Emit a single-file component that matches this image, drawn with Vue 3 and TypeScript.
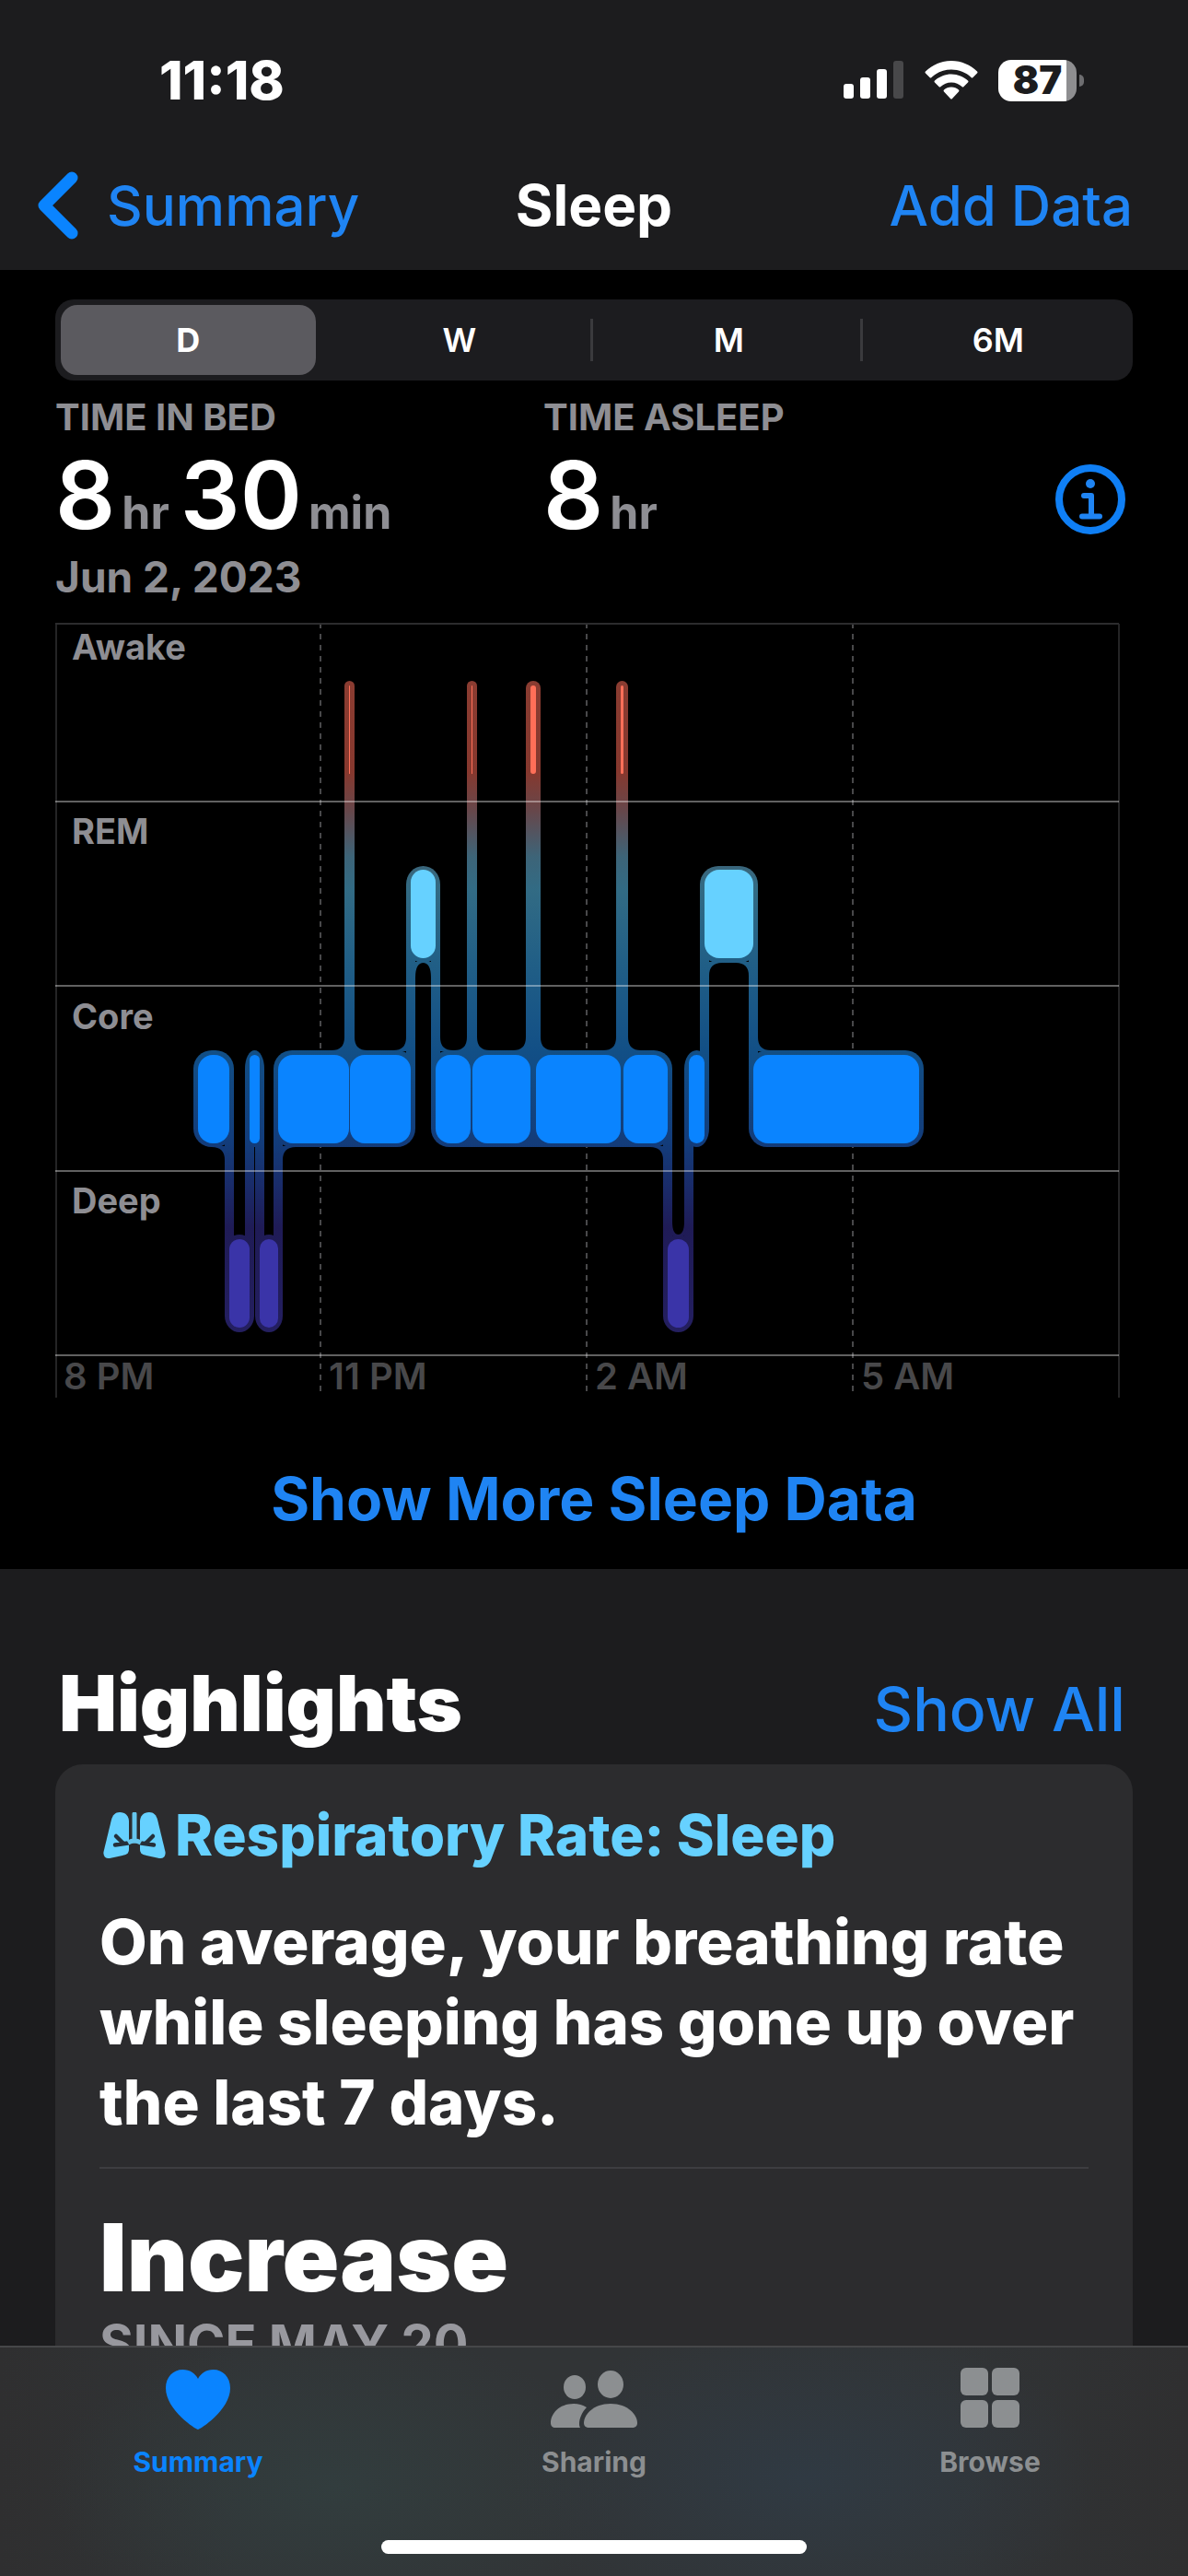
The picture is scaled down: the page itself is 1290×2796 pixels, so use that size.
<script setup lang="ts">
import { ref } from 'vue'

interface Bar {
  x: number
  w: number
}

interface Stage {
  name: string
  top: number
  color: string
  bars: Bar[]
}

interface Fillet {
  x: number
  y: number
  dx: number
  dy: number
  rx: number
  ry: number
}

const ranges = ['D', 'W', 'M', '6M']
const range = ref('D')

const barHeight = 96
const halo = 5

const stages: Stage[] = [
  {
    name: 'Awake',
    top: 68,
    color: '#ff6f58',
    bars: [{ x: 319, w: 1 }, { x: 452, w: 1 }, { x: 516, w: 6 }, { x: 614, w: 3 }],
  },
  { name: 'REM', top: 268, color: '#66d1ff', bars: [{ x: 386, w: 27 }, { x: 705, w: 53 }] },
  {
    name: 'Core',
    top: 469,
    color: '#0a84ff',
    bars: [
      { x: 155, w: 34 },
      { x: 211, w: 11 },
      { x: 242, w: 77 },
      { x: 320, w: 66 },
      { x: 413, w: 38 },
      { x: 453, w: 63 },
      { x: 522, w: 92 },
      { x: 617, w: 48 },
      { x: 688, w: 17 },
      { x: 758, w: 180 },
    ],
  },
  { name: 'Deep', top: 669, color: '#3a34a8', bars: [{ x: 189, w: 22 }, { x: 222, w: 20 }, { x: 665, w: 23 }] },
]

// Uninterrupted runs of a stage share one halo
const coreRuns: Bar[] = [
  { x: 155, w: 34 },
  { x: 211, w: 11 },
  { x: 242, w: 144 },
  { x: 413, w: 252 },
  { x: 688, w: 17 },
  { x: 758, w: 180 },
]

// Vertical links between REM and Core, and between Core and Deep
const remLinks = [381, 408, 700, 753]
const deepLinks = [184, 206, 217, 237, 660, 683]

const fillet = (x: number, y: number, dx: number, dy: number, rx = 14, ry = rx): Fillet => ({ x, y, dx, dy, rx, ry })

const fillets: Fillet[] = [
  ...stages[0].bars.flatMap((b) => [
    fillet(b.x - halo, 464, -1, -1),
    fillet(b.x + b.w + halo, 464, 1, -1),
  ]),
  fillet(381, 464, -1, -1),
  fillet(418, 464, 1, -1),
  fillet(763, 464, 1, -1),
  fillet(391, 369, 1, 1, 9, 16),
  fillet(408, 369, -1, 1, 9, 16),
  fillet(710, 369, 1, 1),
  fillet(753, 369, -1, 1),
  fillet(184, 569, -1, 1),
  fillet(247, 569, 1, 1),
  fillet(660, 569, -1, 1),
  fillet(670, 664, 1, -1, 7, 14),
  fillet(683, 664, -1, -1, 7, 14),
]

const filletPath = (f: Fillet): string =>
  `M${f.x} ${f.y - f.dy}V${f.y + f.dy * f.ry}Q${f.x} ${f.y} ${f.x + f.dx * f.rx} ${f.y}V${f.y - f.dy}Z`

const rows = [194, 394, 595, 795]
const labelBaselines = [40, 240, 441, 641]
const hours = [
  { x: 0, label: '8 PM' },
  { x: 288, label: '11 PM' },
  { x: 577, label: '2 AM' },
  { x: 866, label: '5 AM' },
]

const tabs = ['Summary', 'Sharing', 'Browse']
const activeTab = ref('Summary')
</script>

<template>
  <div class="app">
    <header class="top">
      <div class="status">
        <span class="clock">11:18</span>
        <div class="indicators">
          <svg class="signal" width="66" height="42" viewBox="0 0 66 42" aria-hidden="true">
            <rect x="0" y="25" width="11" height="16" rx="3" fill="#fff" />
            <rect x="18" y="18" width="11" height="23" rx="3" fill="#fff" />
            <rect x="36" y="9" width="11" height="32" rx="3" fill="#fff" />
            <rect x="54" y="0" width="11" height="41" rx="3" fill="#48484a" />
          </svg>
          <svg class="wifi" width="58" height="42" viewBox="0 0 58 42" aria-hidden="true">
            <path d="M29 0C40 0 50 4.500 57 11.500Q58 12.500 57 13.500L52.500 18Q51.500 19 50.500 18C45 12.500 37 9.500 29 9.500S13 12.500 7.500 18Q6.500 19 5.500 18L1 13.500Q0 12.500 1 11.500C8 4.500 18 0 29 0Z" fill="#fff" />
            <path d="M29 14.500C36 14.500 42.500 17.500 47 21.500Q48 22.500 47 23.500L42.500 28Q41.500 29 40.500 28C37.500 25.500 33.500 23.500 29 23.500S20.500 25.500 17.500 28Q16.500 29 15.500 28L11 23.500Q10 22.500 11 21.500C15.500 17.500 22 14.500 29 14.500Z" fill="#fff" />
            <path d="M29 28.500C32 28.500 35 29.700 37 31.500Q38 32.500 37 33.500L30 41Q29 42 28 41L21 33.500Q20 32.500 21 31.500C23 29.700 26 28.500 29 28.500Z" fill="#fff" />
          </svg>
          <div class="battery"><span>87</span></div>
        </div>
      </div>
      <nav class="nav">
        <a href="#" class="back">
          <svg width="46" height="74" viewBox="0 0 46 74" aria-hidden="true">
            <path d="M38 7L8 37L38 67" fill="none" stroke="#0a84ff" stroke-width="13" stroke-linecap="round" stroke-linejoin="round" />
          </svg>
          Summary
        </a>
        <h1>Sleep</h1>
        <button type="button" class="link add">Add Data</button>
      </nav>
    </header>

    <main class="scroll">
      <section class="sleep">
        <div class="segments" role="group" aria-label="Range">
          <button
            v-for="r in ranges"
            :key="r"
            type="button"
            :class="{ selected: r === range }"
            :aria-pressed="r === range"
            @click="range = r"
          >
            {{ r }}
          </button>
        </div>

        <div class="metrics">
          <div>
            <h2>TIME IN BED</h2>
            <p class="value"><b>8</b><span>hr</span><b>30</b><span>min</span></p>
          </div>
          <div>
            <h2>TIME ASLEEP</h2>
            <p class="value"><b>8</b><span>hr</span></p>
          </div>
          <button type="button" class="info" aria-label="About sleep stages">
            <svg width="76" height="76" viewBox="0 0 76 76" aria-hidden="true">
              <circle cx="38" cy="38" r="34" fill="none" stroke="#0f7ff5" stroke-width="8" />
              <circle cx="38" cy="21" r="5" fill="#1f84f3" />
              <path d="M31 34H39V56M29 56.500H48" fill="none" stroke="#1f84f3" stroke-width="6" stroke-linecap="round" stroke-linejoin="round" />
            </svg>
          </button>
        </div>
        <p class="date">Jun 2, 2023</p>

        <svg class="chart" viewBox="0 0 1170 842" role="img" aria-label="Sleep stages from 8 PM to 8 AM">
          <defs>
            <linearGradient id="stage-gradient" gradientUnits="userSpaceOnUse" x1="0" y1="63" x2="0" y2="770">
              <stop offset="0" stop-color="#8a3c31" />
              <stop offset="0.140" stop-color="#86382e" />
              <stop offset="0.200" stop-color="#66474b" />
              <stop offset="0.270" stop-color="#3d6478" />
              <stop offset="0.320" stop-color="#326b84" />
              <stop offset="0.430" stop-color="#215f86" />
              <stop offset="0.570" stop-color="#124f86" />
              <stop offset="0.710" stop-color="#133c7a" />
              <stop offset="0.780" stop-color="#1a2a68" />
              <stop offset="0.840" stop-color="#1f1b56" />
              <stop offset="1" stop-color="#241f60" />
            </linearGradient>
          </defs>

          <g stroke="#48484a" stroke-width="2" stroke-dasharray="6 6">
            <path v-for="h in hours.slice(1)" :key="h.x" :d="`M${h.x} 0V838`" />
          </g>

          <g fill="url(#stage-gradient)">
            <rect v-for="b in stages[0].bars" :key="b.x" :x="b.x - halo" y="63" :width="b.w + 10" height="420" :rx="b.w / 2 + halo" />
            <rect v-for="b in stages[1].bars" :key="b.x" :x="b.x - halo" y="264" :width="b.w + 10" height="105" rx="20" />
            <rect v-for="b in coreRuns" :key="b.x" :x="b.x - halo" y="464" :width="b.w + 10" height="105" rx="20" />
            <rect v-for="b in stages[3].bars" :key="b.x" :x="b.x - halo" y="664" :width="b.w + 10" height="106" rx="18" />
            <rect v-for="x in remLinks" :key="x" :x="x" y="316" width="10" height="200" />
            <rect v-for="x in deepLinks" :key="x" :x="x" y="516" width="10" height="200" />
            <path v-for="f in fillets" :key="`${f.x}-${f.y}`" :d="filletPath(f)" />
          </g>

          <g v-for="s in stages" :key="s.name" :fill="s.color">
            <rect v-for="b in s.bars" :key="b.x" :x="b.x" :y="s.top" :width="b.w" :height="barHeight" :rx="Math.min(16, b.w / 2)" />
          </g>

          <path d="M1 841V1M1155 841V1" stroke="#48484a" stroke-width="1" />
          <path d="M0 1H1155" stroke="#2c2c2e" stroke-width="2" />
          <g stroke="#ffffff" stroke-opacity="0.380" stroke-width="2">
            <path v-for="y in rows" :key="y" :d="`M0 ${y}H1155`" />
          </g>

          <g class="stage-label">
            <text v-for="(s, i) in stages" :key="s.name" x="18" :y="labelBaselines[i]">{{ s.name }}</text>
          </g>
          <g class="hour-label">
            <text v-for="h in hours" :key="h.x" :x="h.x + 9" y="832">{{ h.label }}</text>
          </g>
        </svg>

        <button type="button" class="link more">Show More Sleep Data</button>
      </section>

      <section class="highlights">
        <div class="heading">
          <h2>Highlights</h2>
          <a href="#">Show All</a>
        </div>
        <article class="card">
          <h3>
            <svg width="68" height="50" viewBox="0 0 68 50" aria-hidden="true">
              <path d="M18 0C24 0 28 4 28 10V40C28 45 25 46 21 47L7 50C2 50.500 0 47 0.500 43L9 8C10.500 3 13 0 18 0Z" fill="#66d1ff" />
              <path d="M50 0C44 0 40 4 40 10V40C40 45 43 46 47 47L61 50C66 50.500 68 47 67.500 43L59 8C57.500 3 55 0 50 0Z" fill="#66d1ff" />
              <path d="M27 33.500L13 35.500M14 26L22 34M41 33.500L55 35.500M54 26L46 34" fill="none" stroke="#25303a" stroke-width="4.500" stroke-linecap="round" />
              <path d="M34 2V31" stroke="#66c6ee" stroke-width="5" stroke-linecap="round" />
              <path d="M27 33Q34 29 41 33" fill="none" stroke="#66c6ee" stroke-width="5" />
            </svg>
            Respiratory Rate: Sleep
          </h3>
          <p class="body">On average, your breathing rate while sleeping has gone up over the last 7 days.</p>
          <hr />
          <p class="trend">Increase</p>
          <p class="since">SINCE MAY 20</p>
        </article>
      </section>
    </main>

    <footer class="tabbar">
      <nav class="tabs">
        <button
          v-for="t in tabs"
          :key="t"
          type="button"
          :class="{ active: t === activeTab }"
          @click="activeTab = t"
        >
          <svg v-if="t === 'Summary'" width="72" height="68" viewBox="0 0 72 68" fill="currentColor" aria-hidden="true">
            <path d="M36 67C34 67 1 46 1 22C1 10 9 2 19.500 2C27 2 33 6 36 12C39 6 45 2 52.500 2C63 2 71 10 71 22C71 46 38 67 36 67Z" />
          </svg>
          <svg v-else-if="t === 'Sharing'" width="94" height="68" viewBox="0 0 94 68" fill="currentColor" aria-hidden="true">
            <ellipse cx="26" cy="21" rx="12" ry="13" />
            <ellipse cx="65" cy="18" rx="14" ry="15" />
            <path d="M5 65C2 65 0 63 0 60C0 50 9 39 25 39C30 39 35 40.500 39 43C34 48 31 55 31 61C31 63 31.500 64 32 65Z" />
            <path d="M42 65C38 65 36 63 36 60C36 51 46 39 65 39S94 51 94 60C94 63 92 65 88 65Z" />
          </svg>
          <svg v-else width="66" height="68" viewBox="0 0 66 68" fill="currentColor" aria-hidden="true">
            <rect x="1" y="0" width="30" height="30" rx="6" />
            <rect x="35" y="0" width="30" height="30" rx="6" />
            <rect x="1" y="35" width="30" height="30" rx="6" />
            <rect x="35" y="35" width="30" height="30" rx="6" />
          </svg>
          {{ t }}
        </button>
      </nav>
      <div class="home"></div>
    </footer>
  </div>
</template>

<style>
body {
  margin: 0;
  background: #1c1c1e;
}
</style>

<style scoped>
.app {
  display: flex;
  flex-direction: column;
  height: 100vh;
  background: #1c1c1e;
  color: #fff;
  font-family: Inter, 'Liberation Sans', sans-serif;
}

h1,
h2,
h3,
p {
  margin: 0;
}

button {
  padding: 0;
  border: 0;
  background: none;
  color: inherit;
  font: inherit;
  cursor: pointer;
}

a {
  color: #1f84f3;
  text-decoration: none;
}

.top {
  flex: none;
  background: #1c1c1e;
}

.status {
  display: flex;
  align-items: center;
  justify-content: space-between;
  height: 174px;
  padding: 0 113px 0 173px;
}

.clock {
  font-size: 58px;
  font-weight: 800;
}

.indicators {
  display: flex;
  align-items: center;
  gap: 22px;
}

.battery {
  position: relative;
  display: flex;
  align-items: center;
  justify-content: center;
  width: 85px;
  height: 45px;
  margin-right: 8px;
  border-radius: 14px;
  background: linear-gradient(90deg, #fff 74px, #8e8e90 74px);
  color: #1c1c1e;
  font-size: 42px;
  font-weight: 900;
  line-height: 44px;
}

.battery::after {
  content: '';
  position: absolute;
  top: 16px;
  left: 88px;
  width: 5px;
  height: 13px;
  border-radius: 0 6px 6px 0;
  background: #6d6d70;
}

.nav {
  display: grid;
  grid-template-columns: 1fr auto 1fr;
  align-items: center;
  height: 96px;
  padding: 1px 40px 22px;
}

.nav h1 {
  font-size: 62px;
  font-weight: 700;
  line-height: 72px;
}

.back {
  display: flex;
  align-items: center;
  gap: 30px;
  font-size: 60px;
  font-weight: 500;
  line-height: 72px;
}

.link {
  color: #1f84f3;
  font-size: 60px;
  font-weight: 500;
  line-height: 72px;
}

.add {
  justify-self: end;
  padding-right: 20px;
}

.scroll {
  flex: 1;
  min-height: 0;
  overflow-y: auto;
  scrollbar-width: none;
}

.sleep {
  display: flex;
  flex-direction: column;
  padding: 32px 60px 28px;
  background: #000;
}

.segments {
  display: grid;
  grid-template-columns: repeat(4, 1fr);
  padding: 6px 0;
  border-radius: 20px;
  background: #1c1c1f;
}

.segments button {
  position: relative;
  height: 76px;
  font-size: 36px;
  font-weight: 600;
}

.segments .selected {
  margin: 0 10px 0 6px;
  border-radius: 18px;
  background: #5b5a5f;
  font-weight: 700;
}

.segments button:nth-child(n + 3)::before {
  content: '';
  position: absolute;
  top: 15px;
  left: -4px;
  width: 3px;
  height: 46px;
  background: #3a3a3d;
}

.metrics {
  display: grid;
  grid-template-columns: 1fr 1fr 110px;
  margin-top: 16px;
}

.metrics h2 {
  color: #8e8e93;
  font-size: 40px;
  font-weight: 700;
  line-height: 48px;
}

.value {
  display: flex;
  align-items: baseline;
  height: 88px;
  margin-top: 16px;
  line-height: 88px;
}

.value b {
  font-size: 102px;
  font-weight: 600;
}

.value span {
  margin: 0 12px 0 7px;
  color: #8e8e93;
  font-size: 50px;
  font-weight: 700;
}

.info {
  align-self: end;
  justify-self: end;
  height: 76px;
  margin: 0 8px 1px 0;
}

.date {
  margin-top: 19px;
  color: #8e8e93;
  font-size: 46px;
  font-weight: 700;
  line-height: 52px;
}

.chart {
  display: block;
  width: 100%;
  margin-top: 24px;
}

.stage-label {
  fill: #8e8e93;
  font-size: 38px;
  font-weight: 700;
}

.hour-label {
  fill: #48484a;
  font-size: 40px;
  font-weight: 600;
}

.more {
  margin-top: 61px;
  font-size: 64px;
  font-weight: 700;
  line-height: 96px;
}

.highlights {
  padding: 98px 60px 0;
}

.heading {
  display: flex;
  align-items: baseline;
  justify-content: space-between;
  padding: 0 8px 0 4px;
  line-height: 96px;
}

.heading h2 {
  font-size: 84px;
  font-weight: 900;
}

.heading a {
  font-size: 66px;
  font-weight: 500;
}

.card {
  margin-top: 12px;
  padding: 45px 48px 48px;
  border-radius: 30px;
  background: #2c2c2e;
}

.card h3 {
  display: flex;
  align-items: center;
  gap: 10px;
  padding-left: 4px;
  color: #66d1ff;
  font-size: 62px;
  font-weight: 800;
  line-height: 64px;
}

.body {
  margin-top: 40px;
  font-size: 67px;
  font-weight: 800;
  line-height: 87px;
}

hr {
  height: 2px;
  margin: 27px 0 44px;
  border: 0;
  background: #3d3d40;
}

.trend {
  font-size: 102px;
  font-weight: 900;
  line-height: 104px;
}

.since {
  margin-top: 12px;
  color: #98989e;
  font-size: 56px;
  font-weight: 700;
  line-height: 60px;
}

.tabbar {
  display: flex;
  flex: none;
  flex-direction: column;
  align-items: center;
  justify-content: space-between;
  box-sizing: border-box;
  height: 250px;
  padding: 22px 0 24px;
  border-top: 2px solid #464749;
  background:
    radial-gradient(closest-side, #303a43, #303a4300) 85% 30% / 640px 340px no-repeat,
    radial-gradient(closest-side, #323d3e, #323d3e00) 8% 20% / 620px 340px no-repeat,
    linear-gradient(90deg, #2f2f30, #313436 20%, #313436 80%, #2f2f30);
}

.tabs {
  display: grid;
  grid-template-columns: repeat(3, 1fr);
  width: 100%;
}

.tabs button {
  display: flex;
  flex-direction: column;
  align-items: center;
  gap: 16px;
  color: #8c8f91;
  font-size: 30px;
  font-weight: 700;
  line-height: 36px;
}

.tabs .active {
  color: #0a84ff;
}

.home {
  width: 462px;
  height: 15px;
  border-radius: 8px;
  background: #fff;
}
</style>
